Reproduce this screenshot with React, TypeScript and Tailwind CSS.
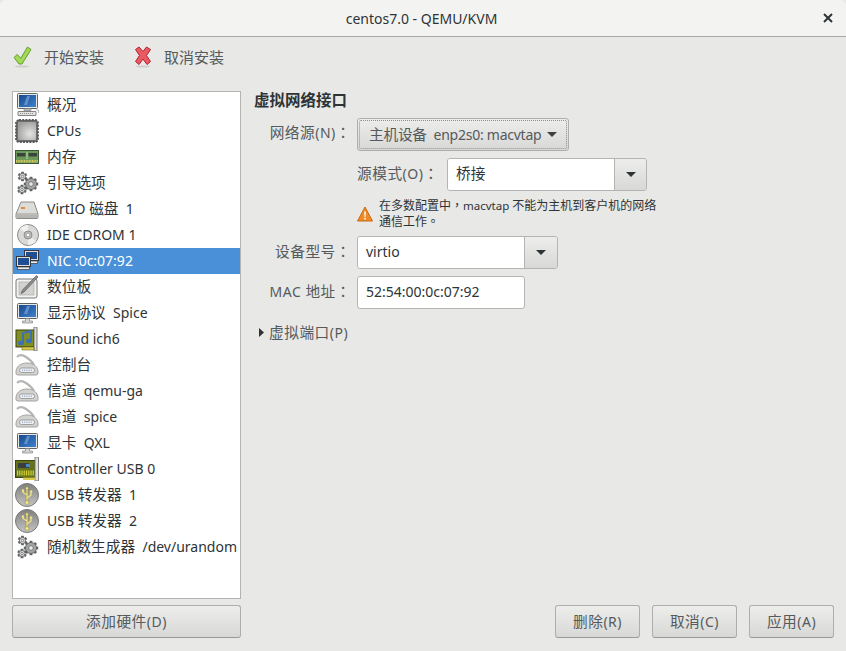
import React from "react";

const FONT = "font-['Noto_Sans','Noto_Sans_CJK_SC',sans-serif]";

function T({ children, cjk = "text-[14.7px]" }: { children: string; cjk?: string }) {
  const parts = children.split(/([\u3000-\u303f\u4e00-\u9fff\uff00-\uffef]+)/);
  return (
    <>
      {parts.map((p, i) => {
        if (i % 2 === 0) return p;
        const sub = p.split(/([，。：]+)/);
        return (
          <span key={i} className={cjk}>
            {sub.map((s, j) =>
              j % 2 === 0 ? (
                s
              ) : (
                <span key={j} className="font-['Noto_Sans_CJK_TC',sans-serif]">
                  {s}
                </span>
              )
            )}
          </span>
        );
      })}
    </>
  );
}

function Monitor({ stand = false }: { stand?: boolean }) {
  return (
    <svg width="24" height="24" viewBox="0 0 24 24">
      <defs>
        <linearGradient id="scr" x1="0" y1="0" x2="1" y2="1">
          <stop offset="0" stopColor="#174a90" />
          <stop offset="1" stopColor="#3f82cc" />
        </linearGradient>
      </defs>
      <rect x="2.5" y={stand ? 2.5 : 0.5} width="20" height="15" rx="1" fill="#e8e8e6" stroke="#5f6362" />
      <rect x="4" y={stand ? 4 : 2} width="17" height="12" fill="url(#scr)" />
      <path d={stand ? "M12 5l3 0-3 8-3 0z" : "M12 3l3 0-3 9-3 0z"} fill="#8fb4de" opacity="0.55" />
      {stand ? (
        <path d="M10.5 17.5h4v2.5h3v2h-10v-2h3z" fill="#d4d4d0" stroke="#777" strokeWidth="0.6" />
      ) : (
        <>
          <rect x="9" y="15.5" width="7" height="2" fill="#bbb" stroke="#666" strokeWidth="0.5" />
          <rect x="3" y="18.5" width="18" height="4" rx="0.5" fill="#e3e3e0" stroke="#555" strokeWidth="0.7" />
          <path d="M5 20.5h14" stroke="#777" strokeWidth="0.8" strokeDasharray="1 1" />
          <path d="M21 17h2.5v3" stroke="#aaa" fill="none" strokeWidth="0.8" />
        </>
      )}
    </svg>
  );
}

function Chip() {
  return (
    <svg width="24" height="24" viewBox="0 0 24 24">
      <defs>
        <radialGradient id="chipg" cx="0.65" cy="0.65" r="0.75">
          <stop offset="0" stopColor="#e4e4e2" />
          <stop offset="1" stopColor="#9d9d9b" />
        </radialGradient>
      </defs>
      <rect x="1" y="1" width="22" height="22" rx="3" fill="#6d6d6b" stroke="#55565a" strokeWidth="1.8" strokeDasharray="2 1.2" />
      <rect x="3" y="3" width="18" height="18" rx="1" fill="url(#chipg)" />
    </svg>
  );
}

function Ram() {
  return (
    <svg width="24" height="24" viewBox="0 0 24 24">
      <rect x="0.5" y="5.5" width="23" height="13" fill="#6d9a5a" stroke="#3e5b38" />
      <rect x="2" y="8" width="8.5" height="3.5" fill="#39453a" />
      <rect x="13.5" y="8" width="8.5" height="3.5" fill="#39453a" />
      <rect x="11.5" y="7" width="1" height="7" fill="#b6dca0" />
      <path d="M1 16.3h22" stroke="#d8c85c" strokeWidth="2.6" strokeDasharray="1 0.6" />
    </svg>
  );
}

function Gears() {
  const gear = (cx: number, cy: number, r: number, n: number, fill: string) => {
    const teeth = [];
    for (let i = 0; i < n; i++) {
      const a = (i * 360) / n;
      teeth.push(
        <rect key={i} x={cx - 1.4} y={cy - r - 1.7} width="2.8" height="3" fill="#5f6162" transform={`rotate(${a} ${cx} ${cy})`} />
      );
    }
    return (
      <g>
        {teeth}
        <circle cx={cx} cy={cy} r={r} fill={fill} stroke="#5f6162" strokeWidth="0.8" />
        <circle cx={cx} cy={cy} r={r * 0.42} fill="#e9e9e7" stroke="#5f6162" strokeWidth="0.7" />
      </g>
    );
  };
  return (
    <svg width="24" height="24" viewBox="0 0 24 24">
      {gear(16, 13, 5.5, 8, "#a3a5a5")}
      {gear(7.5, 5.5, 3, 6, "#e4e4e2")}
      {gear(7, 18.5, 3, 6, "#e4e4e2")}
    </svg>
  );
}

function Disk() {
  return (
    <svg width="24" height="24" viewBox="0 0 24 24">
      <path d="M6 5h13l4 12v3.5a1 1 0 0 1-1 1H2a1 1 0 0 1-1-1V17z" fill="#dcdcd9" stroke="#8a8a87" />
      <path d="M1.5 17h21" stroke="#9b9b98" />
      <path d="M2 18h20v3H2z" fill="#b5b5b2" />
      <rect x="6" y="10" width="4" height="2" fill="#e98a3c" />
    </svg>
  );
}

function Cd() {
  return (
    <svg width="24" height="24" viewBox="0 0 24 24">
      <circle cx="13" cy="12" r="10.5" fill="#d9d9d7" stroke="#8c8c8a" />
      <path d="M13 12L5 6a10 10 0 0 1 8-4z" fill="#f1f1ef" />
      <path d="M13 12l8 6a10 10 0 0 1-8 4z" fill="#efefed" />
      <circle cx="13" cy="12" r="4" fill="#bcbcba" stroke="#8c8c8a" />
      <circle cx="13" cy="12" r="1.8" fill="#fff" stroke="#888" strokeWidth="0.6" />
    </svg>
  );
}

function Nic() {
  const screen = (x: number, y: number) => (
    <g>
      <rect x={x} y={y} width="14" height="10" fill="#dcdcda" stroke="#33383c" />
      <rect x={x + 1.5} y={y + 1.5} width="11" height="7" fill="#1f4f92" />
      <rect x={x + 1} y={y + 10.5} width="12" height="2.5" fill="#eeeeec" stroke="#33383c" strokeWidth="0.7" />
    </g>
  );
  return (
    <svg width="24" height="24" viewBox="0 0 24 24">
      {screen(9.5, 1.5)}
      {screen(1.5, 7.5)}
    </svg>
  );
}

function Tablet() {
  return (
    <svg width="24" height="24" viewBox="0 0 24 24">
      <rect x="1" y="4" width="21" height="19" rx="2" fill="#f2f2ef" stroke="#77797a" />
      <rect x="4" y="7" width="15" height="13" fill="#d2d2cf" stroke="#a0a09e" strokeWidth="0.6" />
      <path d="M21.5 0.5l1.5 1.5L9 17l-3 1.5L7.5 15z" fill="#8c8f90" stroke="#555" strokeWidth="0.7" />
    </svg>
  );
}

function Sound() {
  return (
    <svg width="24" height="24" viewBox="0 0 24 24">
      <rect x="1" y="3" width="18" height="17" fill="#7f8f20" stroke="#3a400e" />
      <rect x="19" y="0" width="3" height="24" fill="#dedede" stroke="#5f6062" strokeWidth="0.8" />
      <path d="M19 20H7v3h12z" fill="#d9c94d" stroke="#5a5a18" strokeWidth="0.5" />
      <path d="M8 16V6l8-2v10" fill="none" stroke="#3d6fb8" strokeWidth="2" />
      <ellipse cx="6" cy="16" rx="3" ry="2.2" fill="#3d6fb8" />
      <ellipse cx="14" cy="14" rx="3" ry="2.2" fill="#3d6fb8" />
    </svg>
  );
}

function Serial() {
  return (
    <svg width="24" height="24" viewBox="0 0 24 24">
      <path d="M2 4C5 1 8 2 11 4 14 6 17 8 19 12" fill="none" stroke="#b5b5b3" strokeWidth="2.2" />
      <path d="M1 19C1 14 5 10 12 10 19 10 23 14 23 19v1a2 2 0 0 1-2 2H3a2 2 0 0 1-2-2z" fill="#d2d2d0" stroke="#a3a3a1" />
      <rect x="4.5" y="15" width="15" height="4.5" rx="2" fill="#eef1f4" stroke="#8e8e8c" strokeWidth="0.8" />
      <path d="M7 17.2h10" stroke="#6f86a8" strokeWidth="1" strokeDasharray="1 1.2" />
    </svg>
  );
}

function UsbCtl() {
  return (
    <svg width="24" height="24" viewBox="0 0 24 24">
      <rect x="0.5" y="3.5" width="20" height="17" fill="#64721a" stroke="#3b4410" />
      <rect x="20" y="0" width="3.5" height="24" fill="#dedede" stroke="#66686a" strokeWidth="0.8" />
      <rect x="3" y="6" width="11" height="5" fill="#3a3e40" />
      <rect x="11" y="7" width="4" height="3" fill="#4a86c9" />
      <path d="M2 16h17" stroke="#d8d23a" strokeWidth="5" strokeDasharray="1 0.8" />
      <path d="M8 20.5h12V23H8z" fill="#d9c94d" />
    </svg>
  );
}

function UsbPlug() {
  return (
    <svg width="24" height="24" viewBox="0 0 24 24">
      <defs>
        <linearGradient id="usbg" x1="0" y1="0" x2="0" y2="1">
          <stop offset="0" stopColor="#7f7f7e" />
          <stop offset="1" stopColor="#c4c4c2" />
        </linearGradient>
      </defs>
      <circle cx="12" cy="12" r="11.5" fill="url(#usbg)" stroke="#77797a" />
      <path d="M12 3l2 3h-1.1v13h-1.8V6H10z" fill="#efe386" stroke="#77702c" strokeWidth="0.4" />
      <path d="M12 15l4-3V9M12 12L8 9.5V8" fill="none" stroke="#efe386" strokeWidth="1.3" />
      <circle cx="12" cy="19.5" r="2" fill="#f2e58a" stroke="#77702c" strokeWidth="0.4" />
      <rect x="15" y="7.5" width="2.2" height="2.2" fill="#efe386" />
      <circle cx="8" cy="7.5" r="1.2" fill="#efe386" />
    </svg>
  );
}

const rows: { icon: React.ReactNode; label: string; selected?: boolean }[] = [
  { icon: <Monitor />, label: "概况" },
  { icon: <Chip />, label: "CPUs" },
  { icon: <Ram />, label: "内存" },
  { icon: <Gears />, label: "引导选项" },
  { icon: <Disk />, label: "VirtIO 磁盘  1" },
  { icon: <Cd />, label: "IDE CDROM 1" },
  { icon: <Nic />, label: "NIC :0c:07:92", selected: true },
  { icon: <Tablet />, label: "数位板" },
  { icon: <Monitor stand />, label: "显示协议  Spice" },
  { icon: <Sound />, label: "Sound ich6" },
  { icon: <Serial />, label: "控制台" },
  { icon: <Serial />, label: "信道  qemu-ga" },
  { icon: <Serial />, label: "信道  spice" },
  { icon: <Monitor stand />, label: "显卡  QXL" },
  { icon: <UsbCtl />, label: "Controller USB 0" },
  { icon: <UsbPlug />, label: "USB 转发器  1" },
  { icon: <UsbPlug />, label: "USB 转发器  2" },
  { icon: <Gears />, label: "随机数生成器  /dev/urandom" },
];

function Caret({ color = "#2e3436" }: { color?: string }) {
  return (
    <svg width="10" height="5" viewBox="0 0 10 5" className="shrink-0">
      <path d="M0 0h10L5 5z" fill={color} />
    </svg>
  );
}

function Button({ children, className = "" }: { children: string; className?: string }) {
  return (
    <button className={`h-[33px] flex items-center justify-center rounded-[3px] border border-[#aeaeab] border-b-[#9a9a97] bg-gradient-to-b from-[#ededec] to-[#d8d8d6] text-[#555a5c] text-[14px] tracking-[0.5px] ${className}`}>
      <span className="pb-[1px]">
        <T>{children}</T>
      </span>
    </button>
  );
}

function Combo({ value, className, textClass }: { value: string; className: string; textClass: string }) {
  return (
    <div className={`h-[33px] flex rounded-[3px] border border-[#b4b4b1] overflow-hidden ${className}`}>
      <div className={`bg-white flex items-center pl-[8px] text-[14px] text-[#2e3436] pb-[2px] ${textClass}`}>
        <span>
          <T>{value}</T>
        </span>
      </div>
      <div className="flex-1 flex items-center justify-center border-l border-[#b4b4b1] bg-gradient-to-b from-[#ededec] to-[#d8d8d6]">
        <Caret />
      </div>
    </div>
  );
}

export default function App() {
  return (
    <div className={`w-[846px] h-[651px] flex flex-col bg-[#e8e8e7] text-[#2e3436] overflow-hidden ${FONT}`}>
      <header className="h-[37px] shrink-0 flex items-center justify-center relative bg-[#f3f3f2] border-b border-[#a9a9a5] text-[14px] text-[#2e3436] rounded-t-[6px]">
        <span className="pr-[3px]">centos7.0 - QEMU/KVM</span>
        <svg width="10" height="10" viewBox="0 0 10 10" className="absolute right-[13px] top-[13px]">
          <path d="M1 1l8 8M9 1l-8 8" stroke="#2e3436" strokeWidth="2" />
        </svg>
      </header>

      <div className="h-[40px] shrink-0 flex items-center pl-[13px] text-[15px] text-[#555a5c]">
        <div className="flex items-center gap-[12px]">
          <svg width="19" height="22" viewBox="0 0 19 22">
            <path d="M1 11.5l3.2-3 3.6 3.8L14.5 1l3.5 2.5L9 18H6z" fill="#a3d957" stroke="#62a02c" strokeWidth="1" strokeLinejoin="round" />
            <ellipse cx="9" cy="20.5" rx="7" ry="1" fill="#cdcdcb" />
          </svg>
          <span>开始安装</span>
        </div>
        <div className="flex items-center gap-[12px] ml-[30px]">
          <svg width="18" height="22" viewBox="0 0 18 22">
            <path d="M1.5 3.5L5 1 9 5.5 12.5 1 16.5 3.5 12.5 9.5l4 6L13 18.5 9 13l-4 5.5-3.5-3 4-6z" fill="#ea5a64" stroke="#b3212c" strokeWidth="1" strokeLinejoin="round" />
            <ellipse cx="9" cy="20.5" rx="7" ry="1" fill="#cdcdcb" />
          </svg>
          <span>取消安装</span>
        </div>
      </div>

      <div className="flex-1 flex gap-[13px] px-[12px] pt-[14px] pb-[13px] min-h-0">
        <aside className="w-[229px] shrink-0 flex flex-col gap-[6px]">
          <div className="flex-1 bg-white border border-[#b4b4b1]">
            {rows.map((r) => (
              <div
                key={r.label}
                className={`h-[26px] flex items-center text-[14px] whitespace-pre ${r.selected ? "bg-[#4a90d9] text-white" : "text-[#2e3436]"}`}
              >
                <span className="w-[34px] shrink-0 flex justify-start pl-[2px]">{r.icon}</span>
                <span className="pb-[2px]">
                  <T>{r.label}</T>
                </span>
              </div>
            ))}
          </div>
          <Button className="w-full">添加硬件(D)</Button>
        </aside>

        <main className="flex-1 flex flex-col min-w-0">
          <div className="flex-1">
            <h2 className="text-[14px] font-bold leading-[18px] text-[#2e3436]">
              <T cjk="text-[15.5px]">虚拟网络接口</T>
            </h2>
            <div className="grid grid-cols-[97px_1fr] gap-x-[6px] gap-y-[7px] mt-[8px] text-[14px] items-center">
              <span className="text-right text-[#555a5c] pb-[5px] tracking-[0.5px]">
                <T>网络源(N)：</T>
              </span>
              <div className="w-[212px] h-[33px] p-[1px] rounded-[3px] border border-[#aeaeab] bg-gradient-to-b from-[#ededec] to-[#d8d8d6]">
                <div className="h-full flex items-center justify-between px-[9px] border border-dotted border-[#8d8d8a] rounded-[2px] text-[#555a5c]">
                  <span className="whitespace-pre pb-[1px] tracking-[-0.25px]">
                    <T>主机设备  enp2s0: macvtap</T>
                  </span>
                  <Caret color="#3d4143" />
                </div>
              </div>

              <span />
              <div className="flex items-center">
                <span className="w-[90px] whitespace-nowrap text-[#555a5c] pb-[3px] tracking-[0.5px]">
                  <T>源模式(O)：</T>
                </span>
                <Combo value="桥接" className="w-[200px]" textClass="w-[166px]" />
              </div>

              <span />
              <div className="flex items-start gap-[6px] text-[11.5px] leading-[15px] h-[31px] text-[#2e3436]">
                <svg width="16" height="16" viewBox="0 0 16 16" className="shrink-0 mt-[8px]">
                  <path d="M8 1L15.5 15H.5z" fill="#f08a24" stroke="#c46a12" strokeLinejoin="round" />
                  <path d="M7.2 5.5h1.6l-.3 5.5h-1z" fill="#fff" />
                  <rect x="7.2" y="11.8" width="1.6" height="1.7" fill="#fff" />
                </svg>
                <span className="w-[278px] -mt-[1px]">
                  <T cjk="text-[12px]">在多数配置中，macvtap 不能为主机到客户机的网络通信工作。</T>
                </span>
              </div>

              <span className="text-right text-[#555a5c] pb-[2px] tracking-[0.5px]">
                <T>设备型号：</T>
              </span>
              <Combo value="virtio" className="w-[201px]" textClass="w-[166px]" />

              <span className="text-right text-[#555a5c] pb-[2px] tracking-[0.5px]">
                <T>MAC 地址：</T>
              </span>
              <div className="w-[168px] h-[33px] flex items-center pl-[8px] pb-[2px] bg-white border border-[#b4b4b1] rounded-[3px]">
                52:54:00:0c:07:92
              </div>
            </div>
            <div className="flex items-center gap-[5px] mt-[12px] pl-[5px] text-[14px] text-[#555a5c] tracking-[0.5px]">
              <svg width="5" height="9" viewBox="0 0 5 9" className="shrink-0">
                <path d="M0 0l5 4.5L0 9z" fill="#2e3436" />
              </svg>
              <span>
                <T>虚拟端口(P)</T>
              </span>
            </div>
          </div>
          <div className="flex justify-end gap-[12px]">
            <Button className="w-[85px]">删除(R)</Button>
            <Button className="w-[85px]">取消(C)</Button>
            <Button className="w-[85px]">应用(A)</Button>
          </div>
        </main>
      </div>
    </div>
  );
}
